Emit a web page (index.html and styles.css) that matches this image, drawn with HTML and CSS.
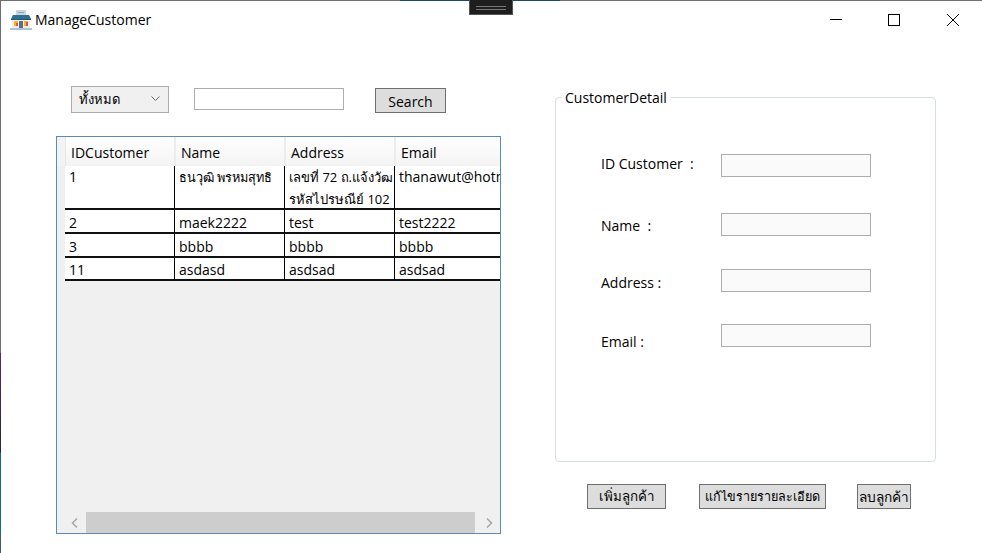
FILE: index.html
```html
<!DOCTYPE html>
<html>
    <head>
        <meta charset="utf-8">
        <title>ManageCustomer</title>
        <link rel="stylesheet" href="styles.css">
    </head>

    <body>
        <div class="window">
            <div class="snap-tab"><span></span><span></span></div>

            <div class="titlebar">
                <svg class="app-icon" width="22" height="20" viewBox="0 0 22 20">
                    <rect x="6" y="0" width="10" height="6" fill="#c9d6de"/>
                    <rect x="8" y="2" width="6" height="1" fill="#8fa3b0"/>
                    <path d="M3 5H19L21 9H1Z" fill="#2f6f8f"/>
                    <rect x="1" y="9" width="20" height="1" fill="#1f5877"/>
                    <rect x="2" y="10" width="18" height="8" fill="#f3efe2"/>
                    <rect x="4" y="11" width="4" height="5" fill="#f0b23c"/>
                    <rect x="6" y="13" width="2" height="3" fill="#d9534f"/>
                    <rect x="9" y="11" width="4" height="7" fill="#5b6f7c"/>
                    <rect x="14" y="11" width="4" height="5" fill="#f0b23c"/>
                    <rect x="16" y="12" width="2" height="4" fill="#d9534f"/>
                    <rect x="0" y="18" width="22" height="2" fill="#a9c6d6"/>
                </svg>
                <span class="app-title">ManageCustomer</span>
                <div class="win-buttons">
                    <svg width="12" height="12" viewBox="0 0 12 12"><path d="M0 5.5H12" stroke="#000" fill="none"/></svg>
                    <svg width="12" height="12" viewBox="0 0 12 12"><rect x="0.5" y="0.5" width="11" height="11" stroke="#000" fill="none"/></svg>
                    <svg class="win-close" width="12" height="12" viewBox="0 0 12 12"><path d="M0 0L12 12M12 0L0 12" stroke="#000" fill="none"/></svg>
                </div>
            </div>

            <div class="content">
                <div class="left-side">
                    <div class="search-bar">
                        <div class="combo">
                            <span class="thai">ทั้งหมด</span>
                            <svg width="9" height="6" viewBox="0 0 9 6"><path d="M0.5 0.5L4.5 4.5L8.5 0.5" stroke="#666" fill="none"/></svg>
                        </div>
                        <input type="text" class="search-input">
                        <button class="btn btn-search">Search</button>
                    </div>

                    <div class="grid">
                        <div class="grid-scroll">
                            <div class="row row-head">
                                <div class="corner"></div>
                                <div class="cell-head">IDCustomer</div>
                                <div class="cell-head">Name</div>
                                <div class="cell-head">Address</div>
                                <div class="cell-head">Email</div>
                            </div>
                            <div class="row row-tall">
                                <div class="row-gutter"></div>
                                <div class="cell">1</div>
                                <div class="cell"><span class="thai-name">ธนวุฒิ พรหมสุทธิ</span></div>
                                <div class="cell"><span class="thai">เลขที่ 72 ถ.แจ้งวัฒ<br>รหัสไปรษณีย์ 102</span></div>
                                <div class="cell cell-last">thanawut@hotmail.com</div>
                            </div>
                            <div class="row">
                                <div class="row-gutter"></div>
                                <div class="cell">2</div>
                                <div class="cell">maek2222</div>
                                <div class="cell">test</div>
                                <div class="cell cell-last">test2222</div>
                            </div>
                            <div class="row">
                                <div class="row-gutter"></div>
                                <div class="cell">3</div>
                                <div class="cell">bbbb</div>
                                <div class="cell">bbbb</div>
                                <div class="cell cell-last">bbbb</div>
                            </div>
                            <div class="row row-end">
                                <div class="row-gutter"></div>
                                <div class="cell">11</div>
                                <div class="cell">asdasd</div>
                                <div class="cell">asdsad</div>
                                <div class="cell cell-last">asdsad</div>
                            </div>
                        </div>
                        <div class="scrollbar">
                            <svg width="8" height="10" viewBox="0 0 8 10"><path d="M6 0.5L1.5 5L6 9.5" stroke="#a6a6a6" stroke-width="1.5" fill="none"/></svg>
                            <div class="thumb"></div>
                            <svg width="8" height="10" viewBox="0 0 8 10"><path d="M2 0.5L6.5 5L2 9.5" stroke="#a6a6a6" stroke-width="1.5" fill="none"/></svg>
                        </div>
                    </div>
                </div>

                <div class="right-side">
                    <fieldset class="detail-box">
                        <legend>CustomerDetail</legend>
                        <div class="form-row row-id">
                            <label>ID Customer &nbsp;:</label>
                            <input type="text">
                        </div>
                        <div class="form-row row-name">
                            <label>Name &nbsp;:</label>
                            <input type="text">
                        </div>
                        <div class="form-row row-address">
                            <label>Address :</label>
                            <input type="text">
                        </div>
                        <div class="form-row row-email">
                            <label>Email :</label>
                            <input type="text">
                        </div>
                    </fieldset>

                    <div class="actions">
                        <button class="btn btn-add">เพิ่มลูกค้า</button>
                        <button class="btn btn-edit">แก้ไขรายรายละเอียด</button>
                        <button class="btn btn-del">ลบลูกค้า</button>
                    </div>
                </div>
            </div>
        </div>
    </body>
</html>
```

FILE: styles.css
```css
* {
  box-sizing: border-box;
}

html, body {
  margin: 0;
  height: 100%;
  background-color: #fff;
}

body {
  font-family: "Open Sans", "Noto Sans", "DejaVu Sans", sans-serif;
  font-size: 14px;
  color: #000;
  overflow: hidden;
}

/* The 1px edges show the desktop behind the window */
.window {
  position: relative;
  width: 982px;
  height: 553px;
  padding: 1px 0 0 1px;
  overflow: hidden;
  background-color: #fff;
  background-image:
    linear-gradient(to right, #6f6f6f 400px, #1a4a6a 400px, #1a4a6a 560px, #6f6f6f 560px),
    linear-gradient(to bottom, #6f6f6f 353px, #5a2a5e 353px, #23245e 452px, #0b6f86 453px, #0b6f86 533px, #4a5a60 533px);
  background-size: 100% 1px, 1px 100%;
  background-repeat: no-repeat;
}

/* Snap tab that lies over the top of the window */
.snap-tab {
  position: absolute;
  top: 0;
  left: 469px;
  width: 44px;
  height: 15px;
  background-color: #1e1e1e;
  border: 1px solid #555;
  border-top: none;
  display: flex;
  flex-direction: column;
  align-items: center;
  gap: 2px;
  padding-top: 6px;
}

.snap-tab span {
  width: 30px;
  height: 1px;
  background-color: #777;
}

.titlebar {
  height: 39px;
  display: flex;
  align-items: center;
  padding-left: 9px;
  padding-bottom: 2px;
}

.app-icon {
  margin-right: 3px;
}

.win-buttons {
  margin-left: auto;
  display: flex;
  gap: 46px;
  padding-right: 23px;
}

.win-close {
  margin-left: 1px;
}

.content {
  display: flex;
}

.thai {
  font-size: 13px;
}

.thai-name {
  font-size: 12.7px;
}

.left-side {
  width: 500px;
  padding-left: 55px;
  padding-top: 46px;
}

.search-bar {
  display: flex;
  align-items: flex-start;
  margin-left: 15px;
  height: 50px;
}

.combo {
  width: 98px;
  height: 27px;
  background-color: #f0f0f0;
  border: 1px solid #acacac;
  display: flex;
  align-items: center;
  justify-content: space-between;
  padding: 0 8px 0 7px;
}

.combo svg {
  margin-bottom: 2px;
}

.search-input {
  width: 150px;
  height: 22px;
  margin: 2px 0 0 25px;
  border: 1px solid #abadb3;
  background-color: #fff;
}

.btn {
  font-family: inherit;
  font-size: 14px;
  color: #000;
  background-color: #dddddd;
  border: 1px solid #707070;
  border-radius: 0;
  padding: 0;
}

.btn-search {
  width: 71px;
  height: 25px;
  margin: 2px 0 0 31px;
  padding-top: 2px;
}

.grid {
  width: 445px;
  height: 398px;
  border: 1px solid #5b8ab5;
  background-color: #f0f0f0;
  display: flex;
  flex-direction: column;
}

.grid-scroll {
  flex: 1;
  overflow: hidden;
}

.row {
  display: flex;
  height: 24px;
  line-height: 26px;
}

.row-tall {
  height: 44px;
  line-height: 22px;
}

.row-end {
  height: 23px;
  line-height: 24px;
}

.row-head {
  height: 29px;
}

.corner {
  width: 9px;
  flex-shrink: 0;
  background-color: #f3f3f3;
  border-right: 1px solid #e6e6e6;
}

.row-gutter {
  width: 8px;
  flex-shrink: 0;
  background-color: #f0f0f0;
}

.cell-head {
  width: 110px;
  flex-shrink: 0;
  padding: 6px 0 0 5px;
  background: linear-gradient(#fff, #f3f3f3);
  border-right: 2px solid #ececec;
  line-height: 19px;
}

.cell {
  width: 110px;
  flex-shrink: 0;
  padding-left: 4px;
  background-color: #fff;
  border-right: 1px solid #000;
  border-bottom: 2px solid #111;
  white-space: nowrap;
  overflow: hidden;
}

.cell-last {
  width: 106px;
  border-right: none;
}

.scrollbar {
  height: 21px;
  display: flex;
  align-items: center;
}

.scrollbar svg:first-child {
  margin-left: 14px;
}

.scrollbar svg:last-child {
  margin-left: 10px;
}

.thumb {
  width: 389px;
  height: 21px;
  flex-shrink: 0;
  background-color: #cdcdcd;
  margin-left: 7px;
}

.right-side {
  padding-left: 54px;
  padding-top: 48px;
}

.detail-box {
  width: 381px;
  height: 374px;
  margin: 0;
  padding: 0;
  border: 1px solid #d5dfe5;
  border-radius: 4px;
}

.detail-box legend {
  margin-left: 6px;
  padding: 0 4px 0 3px;
  font-size: 14px;
  line-height: 19px;
}

.form-row {
  display: flex;
  align-items: flex-start;
  height: 23px;
  margin-left: 45px;
}

.form-row label {
  width: 120px;
}

.form-row input {
  width: 150px;
  height: 23px;
  border: 1px solid #abadb3;
  background-color: #fafafa;
}

.row-id {
  margin-top: 47px;
}

.row-name {
  margin-top: 36px;
}

.row-name label {
  margin-top: 3px;
}

.row-address {
  margin-top: 33px;
}

.row-address label {
  margin-top: 4px;
}

.row-email {
  margin-top: 32px;
}

.row-email label {
  margin-top: 8px;
}

.actions {
  display: flex;
  margin-top: 22px;
  margin-left: 32px;
}

.actions .btn {
  height: 25px;
  white-space: nowrap;
}

.btn-add {
  width: 79px;
  font-size: 13.3px;
}

.actions .btn-edit {
  width: 127px;
  margin-left: 33px;
  font-size: 12.6px;
}

.actions .btn-del {
  width: 54px;
  margin-left: 31px;
  font-size: 13.7px;
}
```
